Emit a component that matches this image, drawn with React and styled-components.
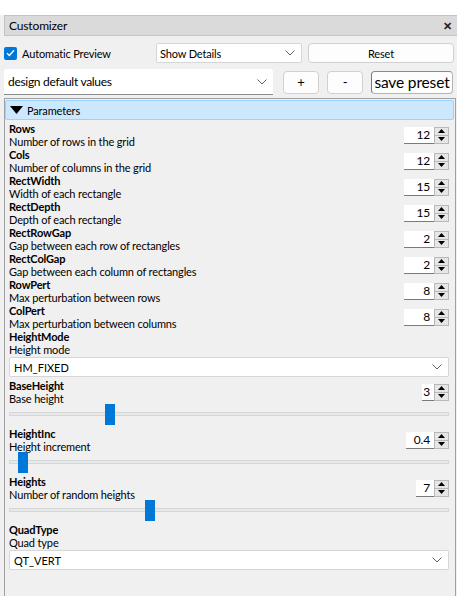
import React from 'react'
import styled, { createGlobalStyle } from 'styled-components'

const GlobalStyle = createGlobalStyle`
  html, body {
    margin: 0;
    background: #fff;
  }
  body {
    font-family: Lato, "Noto Sans", sans-serif;
    font-size: 11px;
    letter-spacing: -0.15px;
    color: #000;
  }
`

const intParams = [
  { name: 'Rows', desc: 'Number of rows in the grid', value: 12 },
  { name: 'Cols', desc: 'Number of columns in the grid', value: 12 },
  { name: 'RectWidth', desc: 'Width of each rectangle', value: 15 },
  { name: 'RectDepth', desc: 'Depth of each rectangle', value: 15 },
  { name: 'RectRowGap', desc: 'Gap between each row of rectangles', value: 2 },
  { name: 'RectColGap', desc: 'Gap between each column of rectangles', value: 2 },
  { name: 'RowPert', desc: 'Max perturbation between rows', value: 8 },
  { name: 'ColPert', desc: 'Max perturbation between columns', value: 8 },
]

const Chevron = () => (
  <svg width="10" height="6" viewBox="0 0 10 6">
    <path d="M0.5 0.5 L5 5 L9.5 0.5" fill="none" stroke="#606060" strokeWidth="1" />
  </svg>
)

const Combo = ({ children, ...rest }) => (
  <ComboBox {...rest}>
    <span>{children}</span>
    <Chevron />
  </ComboBox>
)

const Spin = ({ value, width }) => (
  <SpinBox>
    <SpinValue $w={width}>{value}</SpinValue>
    <SpinButtons>
      <SpinArrow>
        <svg width="7" height="4" viewBox="0 0 7 4"><path d="M3.5 0 L7 4 L0 4 Z" fill="#000" /></svg>
      </SpinArrow>
      <SpinArrow>
        <svg width="7" height="4" viewBox="0 0 7 4"><path d="M0 0 L7 0 L3.5 4 Z" fill="#000" /></svg>
      </SpinArrow>
    </SpinButtons>
  </SpinBox>
)

const Param = ({ name, desc, children }) => (
  <ParamRow>
    <ParamText>
      <ParamName>{name}</ParamName>
      <ParamDesc>{desc}</ParamDesc>
    </ParamText>
    {children}
  </ParamRow>
)

const Slider = ({ pos }) => (
  <SliderWrap>
    <Track />
    <Thumb style={{ left: `calc(${pos} * (100% - 10px))` }} />
  </SliderWrap>
)

export default function App() {
  return (
    <>
      <GlobalStyle />
      <Window>
        <TitleBar>
          <span>Customizer</span>
          <Close>✕</Close>
        </TitleBar>

        <TopRow>
          <CheckLabel>
            <Check>
              <svg width="9" height="8" viewBox="0 0 9 8">
                <path d="M1 4.2 L3.4 6.5 L8 1.2" fill="none" stroke="#fff" strokeWidth="1.3" />
              </svg>
            </Check>
            Automatic Preview
          </CheckLabel>
          <Combo $w="146px">Show Details</Combo>
          <Button>Reset</Button>
        </TopRow>

        <PresetRow>
          <PresetCombo>
            <span>design default values</span>
            <Chevron />
          </PresetCombo>
          <SmallButton>+</SmallButton>
          <SmallButton>-</SmallButton>
          <SaveButton>save preset</SaveButton>
        </PresetRow>

        <Panel>
          <GroupHeader>
            <svg width="13" height="8" viewBox="0 0 13 8"><path d="M0 0 L13 0 L6.5 8 Z" fill="#000" /></svg>
            Parameters
          </GroupHeader>
          <ParamList>
            {intParams.map(p => (
              <Param key={p.name} name={p.name} desc={p.desc}>
                <Spin value={p.value} width={30} />
              </Param>
            ))}

            <Param name="HeightMode" desc="Height mode" />
            <FieldCombo>HM_FIXED</FieldCombo>

            <Param name="BaseHeight" desc="Base height">
              <Spin value={3} width={12} />
            </Param>
            <Slider pos={0.223} />

            <Param name="HeightInc" desc="Height increment">
              <Spin value="0.4" width={28} />
            </Param>
            <Slider pos={0.021} />

            <Param name="Heights" desc="Number of random heights">
              <Spin value={7} width={18} />
            </Param>
            <Slider pos={0.316} />

            <Param name="QuadType" desc="Quad type" />
            <FieldCombo>QT_VERT</FieldCombo>
          </ParamList>
        </Panel>
      </Window>
    </>
  )
}

const Window = styled.div`
  margin-top: 15px;
  height: 581px;
  background: #f0f0f0;
  display: flex;
  flex-direction: column;
  overflow: hidden;
`

const TitleBar = styled.div`
  margin-left: 4px;
  height: 19px;
  background: #dadada;
  border-top: 1px solid #c4c4c4;
  border-bottom: 1px solid #c4c4c4;
  border-left: 1px solid #c4c4c4;
  display: flex;
  align-items: center;
  justify-content: space-between;
  padding: 0 5px 0 4px;
  font-size: 12px;
`

const Close = styled.span`
  font-size: 11px;
  font-weight: 900;
  color: #222;
`

const TopRow = styled.div`
  margin-top: 7px;
  height: 20px;
  display: flex;
  align-items: stretch;
  padding: 0 3px 0 4px;
`

const CheckLabel = styled.label`
  width: 152px;
  display: flex;
  align-items: center;
  gap: 5px;
`

const Check = styled.span`
  width: 13px;
  height: 13px;
  border-radius: 2px;
  background: #0078d7;
  display: flex;
  align-items: center;
  justify-content: center;
`

const ComboBox = styled.div`
  box-sizing: border-box;
  width: ${p => p.$w || 'auto'};
  flex: ${p => (p.$w ? 'none' : '1')};
  background: #fff;
  border: 1px solid #d6d6d6;
  border-radius: 2px;
  display: flex;
  align-items: center;
  justify-content: space-between;
  padding: 0 6px 0 3px;
`

const Button = styled.div`
  flex: 1;
  margin-left: 6px;
  box-sizing: border-box;
  background: #fdfdfd;
  border: 1px solid #d0d0d0;
  border-radius: 4px;
  display: flex;
  align-items: center;
  justify-content: center;
`

const PresetRow = styled.div`
  margin-top: 6px;
  height: 26px;
  display: flex;
  align-items: center;
  padding: 0 4px 0 4px;
  gap: 8px;
`

const PresetCombo = styled.div`
  box-sizing: border-box;
  width: 269px;
  height: 26px;
  margin-right: 2px;
  background: #fff;
  border-bottom: 1px solid #8a8a8a;
  border-radius: 3px 3px 0 0;
  display: flex;
  align-items: center;
  justify-content: space-between;
  padding: 0 6px 0 4px;
  font-size: 12px;
  letter-spacing: -0.3px;
`

const SmallButton = styled.div`
  box-sizing: border-box;
  width: 36px;
  height: 23px;
  background: #fdfdfd;
  border: 1px solid #d0d0d0;
  border-radius: 4px;
  display: flex;
  align-items: center;
  justify-content: center;
  font-size: 13px;
  white-space: nowrap;
`

const SaveButton = styled(SmallButton)`
  width: 82px;
  font-size: 15.5px;
  border-color: #b4b4b4;
  border-left-color: #7a7a7a;
  border-top-color: #8a8a8a;
`

const Panel = styled.div`
  flex: 1;
  margin: 3px 1px 0 4px;
  border: 1px solid #a0a0a0;
  border-bottom: none;
  padding: 1px 1px 0 0;
`

const GroupHeader = styled.div`
  box-sizing: border-box;
  height: 20px;
  background: #cce8ff;
  border: 1px solid #99d1ff;
  border-radius: 2px;
  display: flex;
  align-items: center;
  gap: 4px;
  padding-left: 4px;
`

const ParamList = styled.div`
  padding: 2px 5px 0 4px;
  display: flex;
  flex-direction: column;
`

const ParamRow = styled.div`
  height: 26px;
  flex: none;
  display: flex;
  align-items: center;
  justify-content: space-between;
`

const ParamText = styled.div`
  display: flex;
  flex-direction: column;
  line-height: 13px;
`

const ParamName = styled.div`
  font-weight: 700;
`

const ParamDesc = styled.div``

const SpinBox = styled.div`
  height: 17px;
  display: flex;
`

const SpinValue = styled.div`
  box-sizing: border-box;
  width: ${p => p.$w}px;
  background: #fff;
  border-bottom: 1px solid #7a7a7a;
  text-align: right;
  padding-right: 4px;
  line-height: 16px;
  font-size: 12px;
`

const SpinButtons = styled.div`
  box-sizing: border-box;
  width: 15px;
  border: 1px solid #b8b8b8;
  background: #e6e6e6;
  display: flex;
  flex-direction: column;
`

const SpinArrow = styled.div`
  flex: 1;
  display: flex;
  align-items: center;
  justify-content: center;
  & + & {
    border-top: 1px solid #b8b8b8;
  }
`

const FieldCombo = styled(Combo)`
  flex: none;
  height: 20px;
  margin: 1px 0 2px;
  padding-left: 4px;
  letter-spacing: 0;
`

const SliderWrap = styled.div`
  position: relative;
  flex: none;
  height: 22px;
  margin: -1px 0 1px;
`

const Track = styled.div`
  position: absolute;
  left: 0;
  right: 0;
  top: 8px;
  height: 4px;
  box-sizing: border-box;
  background: #e7eaea;
  border: 1px solid #d6d6d6;
`

const Thumb = styled.div`
  position: absolute;
  top: 0;
  width: 10px;
  height: 21px;
  background: #0078d7;
`
